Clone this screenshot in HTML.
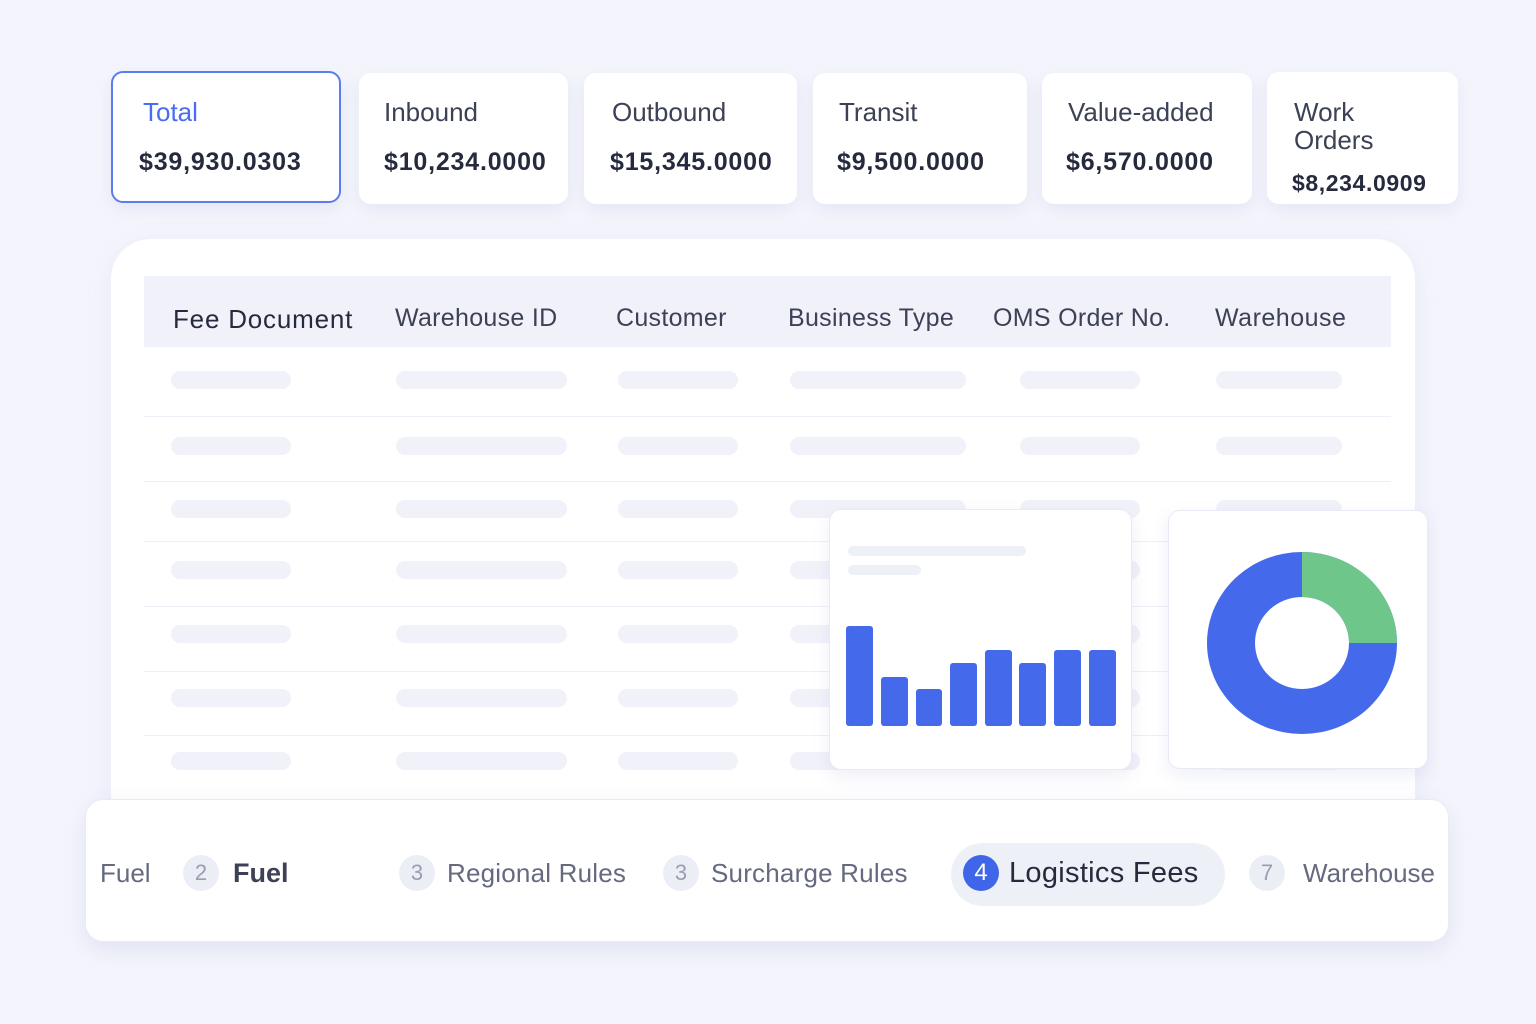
<!DOCTYPE html>
<html><head><meta charset="utf-8"><style>
body{margin:0;width:1536px;height:1024px;background:#f4f5fc;font-family:"Liberation Sans",sans-serif;position:relative;overflow:hidden;color:#2b2f45}
.a{position:absolute}
div{white-space:nowrap}
.card{position:absolute;background:#fff;border-radius:12px;box-shadow:0 6px 18px rgba(90,100,180,.10);box-sizing:border-box}
.lab{position:absolute;font-size:26px;color:#3d4156;line-height:28px}
.val{position:absolute;font-size:25px;font-weight:bold;color:#262a3d;letter-spacing:.8px}
.sk{position:absolute;height:18px;background:#f1f2f9;border-radius:9px}
.hl{position:absolute;left:144px;width:1247px;height:1px;background:#eef0f7}
.th{position:absolute;top:304px;font-size:25px;color:#3d4156}
.tab{position:absolute;font-size:26px;color:#666a80;top:858px}
.num{position:absolute;width:36px;height:36px;border-radius:50%;background:#eceef6;color:#9a9db0;font-size:22px;text-align:center;line-height:36px;top:855px}
</style></head><body>
<div class="card" style="left:111px;top:71px;width:230px;height:132px;border:2px solid #5b7df0"></div>
<div class="lab" style="left:143px;top:98px;color:#4a6cf0">Total</div>
<div class="val" style="left:139px;top:148px">$39,930.0303</div>
<div class="card" style="left:359px;top:73px;width:209px;height:131px"></div>
<div class="lab" style="left:384px;top:98px">Inbound</div>
<div class="val" style="left:384px;top:148px">$10,234.0000</div>
<div class="card" style="left:584px;top:73px;width:213px;height:131px"></div>
<div class="lab" style="left:612px;top:98px">Outbound</div>
<div class="val" style="left:610px;top:148px">$15,345.0000</div>
<div class="card" style="left:813px;top:73px;width:214px;height:131px"></div>
<div class="lab" style="left:839px;top:98px">Transit</div>
<div class="val" style="left:837px;top:148px">$9,500.0000</div>
<div class="card" style="left:1042px;top:73px;width:210px;height:131px"></div>
<div class="lab" style="left:1068px;top:98px">Value-added</div>
<div class="val" style="left:1066px;top:148px">$6,570.0000</div>
<div class="card" style="left:1267px;top:72px;width:191px;height:132px"></div>
<div class="lab" style="left:1294px;top:98px;white-space:normal">Work<br>Orders</div>
<div class="val" style="left:1292px;top:170px;font-size:23px;letter-spacing:.6px">$8,234.0909</div>

<div class="card" style="left:111px;top:239px;width:1304px;height:600px;border-radius:40px;box-shadow:0 6px 30px rgba(90,100,180,.08)"></div>
<div class="a" style="left:144px;top:276px;width:1247px;height:71px;background:#f0f1f9"></div>
<div class="th" style="left:173px;color:#262a3d;font-size:26px;letter-spacing:.8px">Fee Document</div>
<div class="th" style="left:395px;letter-spacing:.3px">Warehouse ID</div>
<div class="th" style="left:616px;letter-spacing:.3px">Customer</div>
<div class="th" style="left:788px;letter-spacing:.3px">Business Type</div>
<div class="th" style="left:993px;letter-spacing:.3px">OMS Order No.</div>
<div class="th" style="left:1215px;letter-spacing:.5px">Warehouse</div>
<div class="hl" style="top:416px"></div><div class="hl" style="top:481px"></div><div class="hl" style="top:541px"></div><div class="hl" style="top:606px"></div><div class="hl" style="top:671px"></div><div class="hl" style="top:735px"></div>
<div id="sk"></div>
<script>
var ys=[371,437,500,561,625,689,752],h='';
ys.forEach(function(y){[[171,120],[396,171],[618,120],[790,176],[1020,120],[1216,126]].forEach(function(c){h+='<div class="sk" style="left:'+c[0]+'px;top:'+y+'px;width:'+c[1]+'px"></div>';});});
document.getElementById('sk').innerHTML=h;
</script>

<div class="card" style="left:829px;top:509px;width:303px;height:261px;border:1px solid #e8eaf6;z-index:2">
<div class="sk" style="left:18px;top:36px;width:178px;height:10px;background:#eef0f7"></div>
<div class="sk" style="left:18px;top:55px;width:73px;height:10px;background:#eef0f7"></div>
<svg class="a" style="left:0;top:0" width="303" height="261">
<g fill="#4469eb">
<rect x="16" y="116" width="27" height="100" rx="3"/><rect x="51" y="167" width="27" height="49" rx="3"/><rect x="86" y="179" width="26" height="37" rx="3"/><rect x="120" y="153" width="27" height="63" rx="3"/><rect x="155" y="140" width="27" height="76" rx="3"/><rect x="189" y="153" width="27" height="63" rx="3"/><rect x="224" y="140" width="27" height="76" rx="3"/><rect x="259" y="140" width="27" height="76" rx="3"/>
</g></svg></div>
<div class="card" style="left:1168px;top:510px;width:260px;height:259px;border:1px solid #e8eaf6;z-index:2">
<svg class="a" style="left:0;top:0" width="260" height="259">
<path fill-rule="evenodd" fill="#4469eb" d="M38 132 A95 91 0 1 0 228 132 A95 91 0 1 0 38 132 Z M86 132 A47 46 0 1 0 180 132 A47 46 0 1 0 86 132 Z"/>
<path d="M133 41 A95 91 0 0 1 228 132 L180 132 A47 46 0 0 0 133 86 Z" fill="#6fc68a"/>
</svg></div>

<div class="card" style="left:85px;top:799px;width:1364px;height:143px;border-radius:18px;border:1px solid #e8eaf6;z-index:3;box-shadow:0 8px 24px rgba(90,100,180,.12)">
</div>
<div style="position:absolute;left:0;top:0;z-index:4">
<div class="tab" style="left:100px">Fuel</div>
<div class="num" style="left:183px">2</div><div class="tab" style="left:233px;color:#3d4156;font-weight:bold;font-size:27px">Fuel</div>
<div class="num" style="left:399px">3</div><div class="tab" style="left:447px;letter-spacing:.2px">Regional Rules</div>
<div class="num" style="left:663px">3</div><div class="tab" style="left:711px;letter-spacing:.2px">Surcharge Rules</div>
<div class="a" style="left:951px;top:843px;width:274px;height:63px;border-radius:32px;background:#eef0f7"></div>
<div class="num" style="left:963px;background:#3f65e8;color:#fff;font-size:24px">4</div><div class="tab" style="left:1009px;color:#262a3d;font-size:29px;top:857px;letter-spacing:.3px">Logistics Fees</div>
<div class="num" style="left:1249px">7</div><div class="tab" style="left:1303px">Warehouse</div>
</div>
</body></html>
